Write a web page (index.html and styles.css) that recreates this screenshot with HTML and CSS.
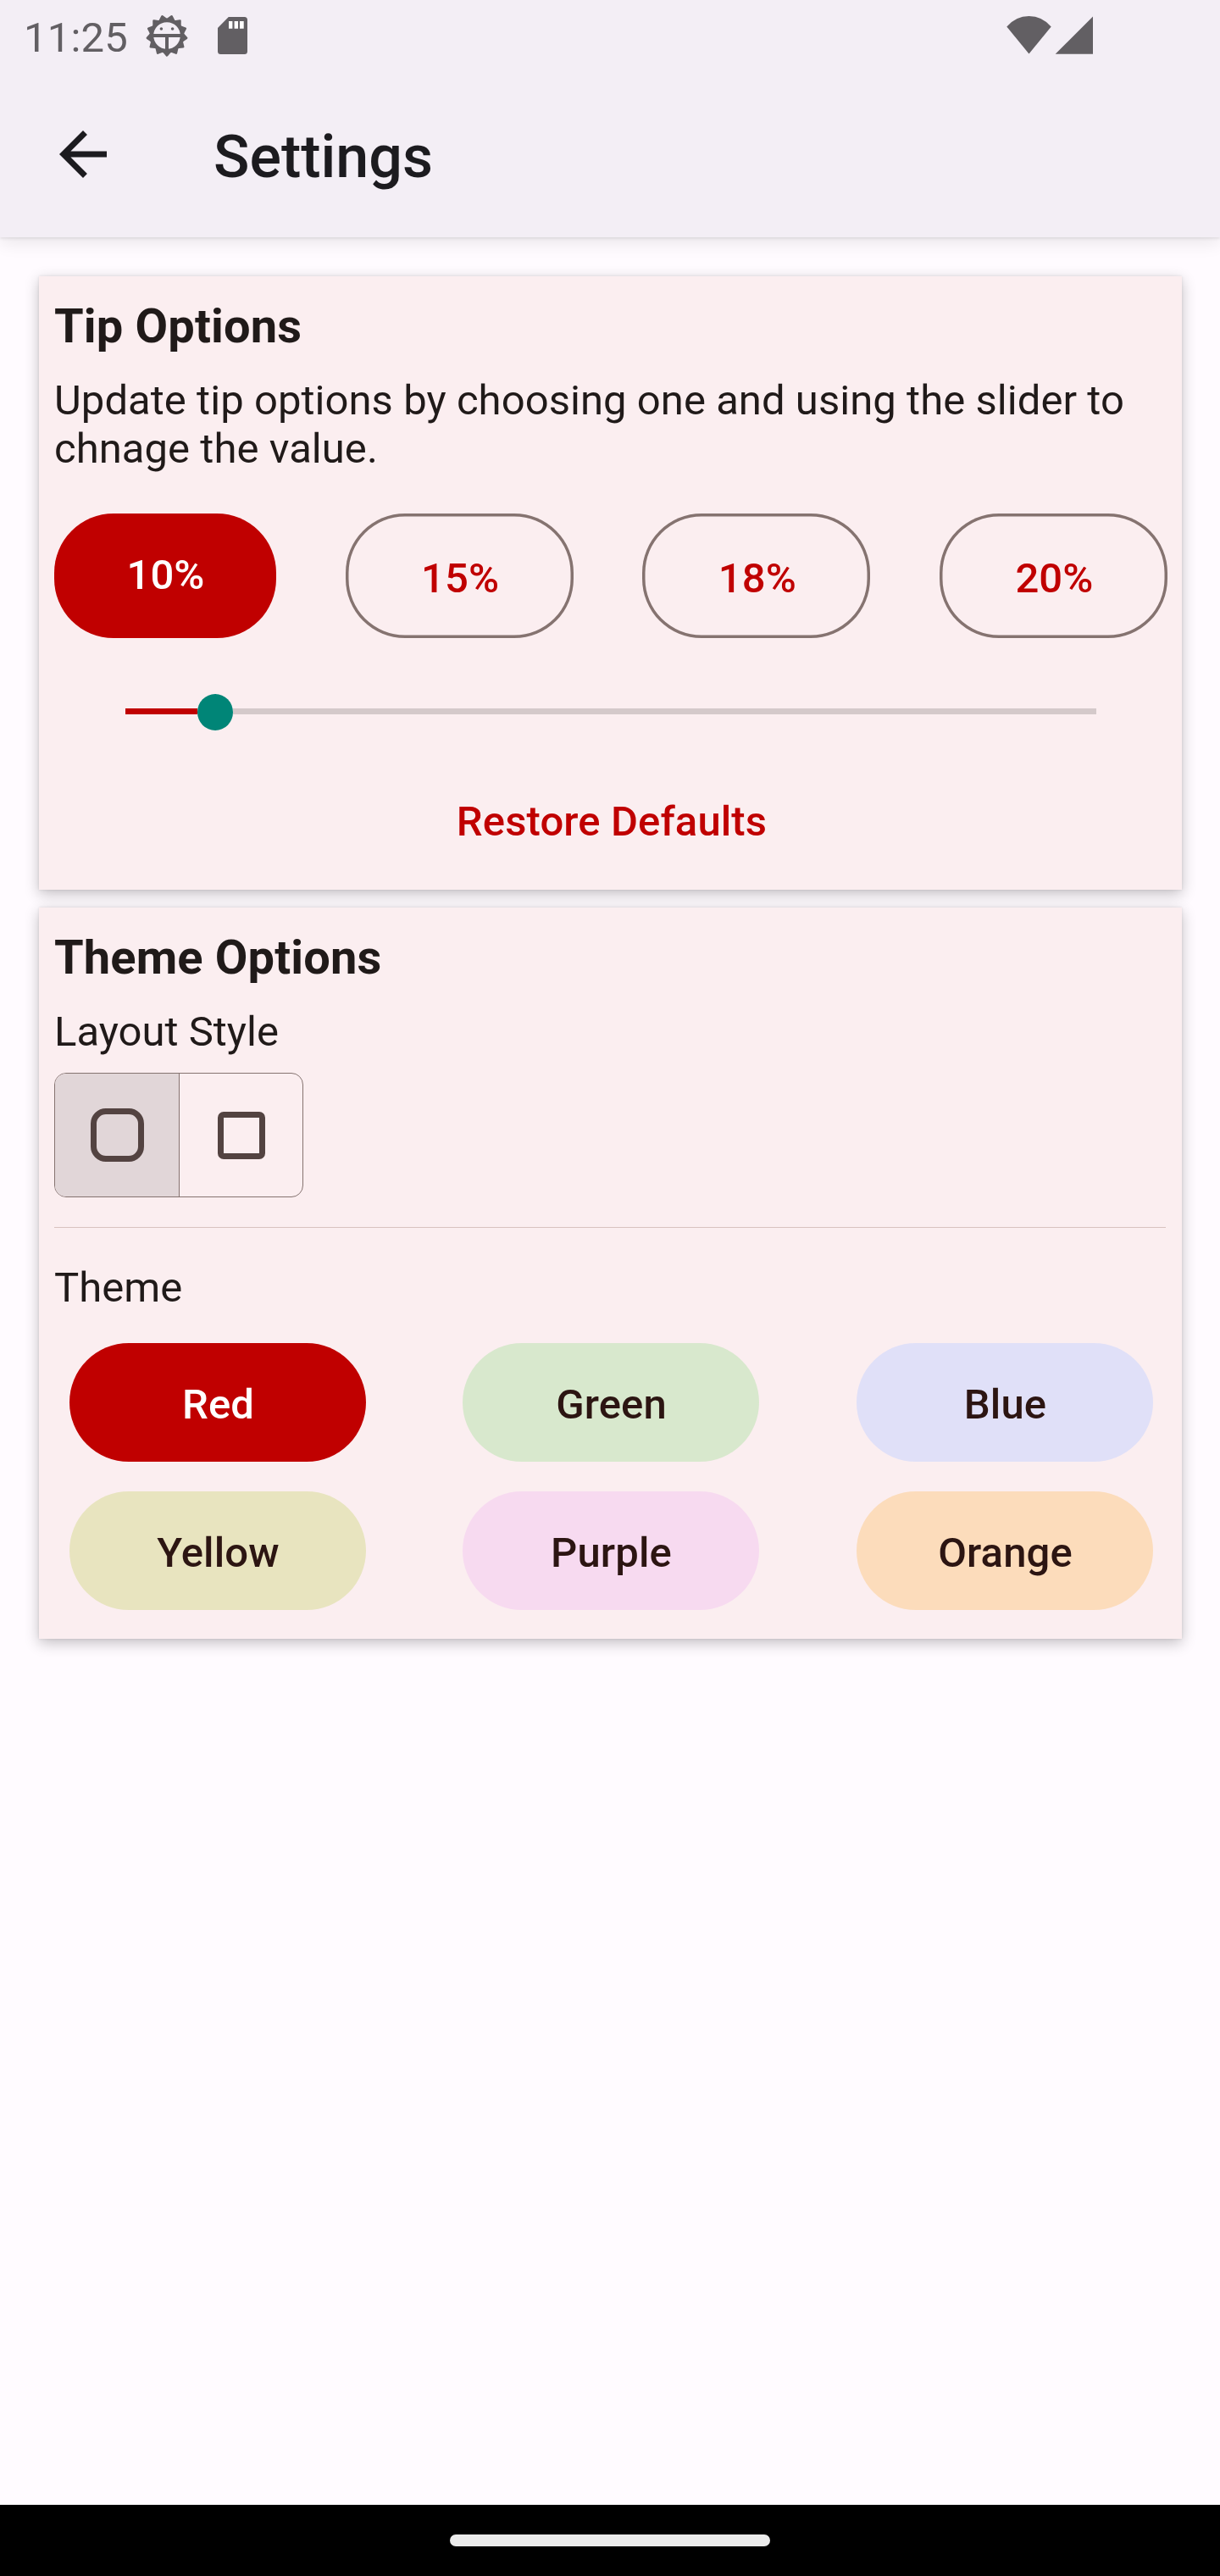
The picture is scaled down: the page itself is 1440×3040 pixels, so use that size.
FILE: index.html
```html
<!DOCTYPE html>
<html lang="en">
<head>
<meta charset="utf-8">
<title>Settings</title>
<link rel="stylesheet" href="styles.css">
</head>
<body>
<div class="screen">
  <header class="top">
    <div class="status">
      <span class="clock">11:25</span>
      <svg class="gear" width="50" height="50" viewBox="-25 -25 50 50">
        <defs><path id="tooth" d="M-3.300 19.500L0 23.300L3.300 19.500Z" fill="#625f63" stroke="#625f63" stroke-width="2.600" stroke-linejoin="round"/></defs>
        <circle r="18.200" fill="none" stroke="#625f63" stroke-width="4.800"/>
        <use href="#tooth"/>
        <use href="#tooth" transform="rotate(27.692)"/>
        <use href="#tooth" transform="rotate(55.385)"/>
        <use href="#tooth" transform="rotate(83.077)"/>
        <use href="#tooth" transform="rotate(110.769)"/>
        <use href="#tooth" transform="rotate(138.462)"/>
        <use href="#tooth" transform="rotate(166.154)"/>
        <use href="#tooth" transform="rotate(193.846)"/>
        <use href="#tooth" transform="rotate(221.538)"/>
        <use href="#tooth" transform="rotate(249.231)"/>
        <use href="#tooth" transform="rotate(276.923)"/>
        <use href="#tooth" transform="rotate(304.615)"/>
        <use href="#tooth" transform="rotate(332.308)"/>
        <path d="M-17 0H17M0 0V17" fill="none" stroke="#625f63" stroke-width="4"/>
        <circle cx="-6.600" cy="-8" r="1.800" fill="#625f63"/>
        <circle cx="6.600" cy="-8" r="1.800" fill="#625f63"/>
      </svg>
      <svg class="sd" width="35" height="44" viewBox="0 0 35 44">
        <path d="M12.800 0H31.500A3.500 3.500 0 0 1 35 3.500V40.500A3.500 3.500 0 0 1 31.500 44H3.500A3.500 3.500 0 0 1 0 40.500V13Z" fill="#625f63"/>
        <path d="M13 5h4.400v8.700H13zM19.600 5H24v8.700h-4.400zM26 5h4.700v8.700H26z" fill="#fff"/>
      </svg>
      <svg class="signals" width="104" height="46" viewBox="0 0 104 46">
        <path d="M26.500 44.500L.3 12.500Q11 0 26.500 0T52.700 12.500Z" fill="#625f63"/>
        <path d="M57.700 44.700H102V.5Z" fill="#625f63"/>
      </svg>
    </div>
    <div class="appbar">
      <svg class="back" width="84" height="84" viewBox="0 0 24 24"><path d="M20 11H7.830l5.590-5.590L12 4l-8 8 8 8 1.410-1.410L7.830 13H20v-2z" fill="#1c1b1f"/></svg>
      <h1>Settings</h1>
    </div>
  </header>

  <main>
    <section class="card">
      <h2>Tip Options</h2>
      <p class="intro">Update tip options by choosing one and using the slider to chnage the value.</p>
      <div class="tips">
        <button class="tip selected">10%</button>
        <button class="tip">15%</button>
        <button class="tip">18%</button>
        <button class="tip">20%</button>
      </div>
      <div class="slider"><div class="fill"></div><div class="thumb"></div><div class="rest"></div></div>
      <button class="restore">Restore Defaults</button>
    </section>

    <section class="card theme-card">
      <h2>Theme Options</h2>
      <p class="layout-label">Layout Style</p>
      <div class="toggle">
        <div class="cell on"><span class="shape round"></span></div>
        <div class="cell"><span class="shape square"></span></div>
      </div>
      <div class="divider"></div>
      <p class="theme-label">Theme</p>
      <div class="themes">
        <button class="theme red">Red</button>
        <button class="theme green">Green</button>
        <button class="theme blue">Blue</button>
        <button class="theme yellow">Yellow</button>
        <button class="theme purple">Purple</button>
        <button class="theme orange">Orange</button>
      </div>
    </section>
  </main>
  <footer class="nav"><div class="handle"></div></footer>
</div>
</body>
</html>
```
FILE: styles.css
```css
* { box-sizing: border-box; margin: 0; padding: 0; }
body {
  font-family: Roboto, "Liberation Sans", sans-serif;
  font-size: 49px;
  line-height: 57px;
  color: #201a19;
  background: #fffbff;
}
button { font: inherit; font-weight: 500; letter-spacing: .12px; border: 0; background: none; white-space: nowrap; }
svg { display: block; flex: none; }
.screen { width: 1440px; height: 3040px; display: flex; flex-direction: column; overflow: hidden; }

.top { height: 280px; background: #f3eef5; box-shadow: 0 2px 3px rgba(0,0,0,.07), 0 6px 20px rgba(0,0,0,.09); }
.status { height: 84px; display: flex; align-items: flex-start; padding: 16px 148px 0 28px; color: #625f63; }
.clock { width: 144px; letter-spacing: .2px; }
.gear { margin-top: 1px; }
.sd { margin: 4px 0 0 35px; }
.signals { margin: 3px 0 0 auto; }
.appbar { height: 196px; display: flex; align-items: flex-start; padding: 56px 0 0 56px; color: #1c1b1f; }
h1 { margin: 4px 0 0 112px; font-size: 70px; line-height: 82px; font-weight: 500; }

main { flex: 1; padding: 46px 45px 0 46px; }
.card {
  height: 724px;
  padding: 26px 17px 0 18px;
  background: #fbeef0;
  box-shadow: 0 0 3px rgba(0,0,0,.1), 0 5px 16px rgba(0,0,0,.24);
  display: flex;
  flex-direction: column;
  align-items: stretch;
}
.theme-card { height: 863px; margin-top: 21px; }
h2 { font-size: 56px; line-height: 66px; font-weight: 700; letter-spacing: .14px; color: #201a19; }
.intro { margin-top: 26px; letter-spacing: .05px; }

.tips { margin-top: 48px; display: flex; justify-content: space-between; }
.tip {
  width: 269px; height: 147px; border-radius: 70px;
  padding: 5px 0 0 2px;
  color: #c00000;
  box-shadow: inset 0 0 0 3.5px #857370;
}
.tip.selected { width: 262px; padding: 0 0 3px 1px; background: #c00000; color: #fff; box-shadow: none; }

.slider { margin: 66px 84px 0; height: 41px; display: flex; align-items: center; }
.fill { width: 85px; height: 7px; background: #c00000; }
.thumb { width: 42px; height: 43px; margin-top: 2px; border-radius: 50%; background: #008577; }
.rest { flex: 1; height: 7px; background: #d4c9ca; }
.restore { margin-top: 81px; padding-left: 2px; color: #c00000; align-self: center; }

.layout-label { margin-top: 26px; }
.toggle { margin-top: 20px; width: 294px; height: 147px; display: flex; border: 1px solid #857370; border-radius: 14px; overflow: hidden; }
.cell { flex: 1; display: flex; align-items: center; justify-content: center; }
.cell.on { padding-left: 1.5px; background: #e1d6d8; border-right: 1px solid #857370; }
.shape { border: 7px solid #534341; }
.round { width: 63px; height: 63px; border-radius: 18px; }
.square { width: 56px; height: 56px; border-radius: 7px; }
.divider { margin: 35px 2px 0 0; height: 1px; background: #d8c2bf; }
.theme-label { margin-top: 42px; }
.themes { margin-top: 37px; padding: 0 17px 0 18px; display: grid; grid-template-columns: 350px 351px 350px; justify-content: space-between; row-gap: 35px; }
.theme { width: 350px; height: 140px; border-radius: 70px; padding: 4px 0 0 1px; color: #2c1512; }
.red { background: #c00000; color: #fff; }
.green { background: #d8e8cd; }
.blue { background: #e0e0f8; }
.yellow { background: #e8e4bf; }
.purple { background: #f7daf0; }
.orange { background: #fcdcbb; }

.nav { height: 84px; background: #000; display: flex; justify-content: center; padding-top: 35px; }
.handle { width: 378px; height: 14px; border-radius: 7px; background: #ebebeb; }
```
